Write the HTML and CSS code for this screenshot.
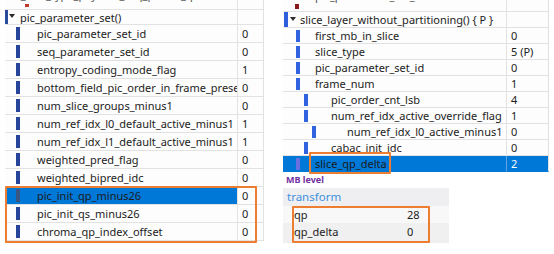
FILE: index.html
```html
<!DOCTYPE html>
<html>
<head>
<meta charset="utf-8">
<link rel="stylesheet" href="styles.css">
</head>
<body>
<div class="canvas">
  <section class="tree tree-left">
    <div class="row cut">
      <div class="name"><span class="cut-mark"></span><span class="cut-text">nal_unit_type_payload_seq_param_q</span></div>
      <div class="val"></div>
    </div>
    <div class="row head">
      <div class="name"><span class="mark"></span><span class="tri"></span><span class="txt">pic_parameter_set()</span></div>
      <div class="val"></div>
    </div>
    <div class="row"><div class="name l1"><span class="bar"></span><span class="txt">pic_parameter_set_id</span></div><div class="val">0</div></div>
    <div class="row"><div class="name l1"><span class="bar"></span><span class="txt">seq_parameter_set_id</span></div><div class="val">0</div></div>
    <div class="row"><div class="name l1"><span class="bar"></span><span class="txt">entropy_coding_mode_flag</span></div><div class="val">1</div></div>
    <div class="row"><div class="name l1"><span class="bar"></span><span class="txt">bottom_field_pic_order_in_frame_present_flag</span></div><div class="val">0</div></div>
    <div class="row"><div class="name l1"><span class="bar"></span><span class="txt">num_slice_groups_minus1</span></div><div class="val">0</div></div>
    <div class="row"><div class="name l1"><span class="bar"></span><span class="txt">num_ref_idx_l0_default_active_minus1</span></div><div class="val">1</div></div>
    <div class="row"><div class="name l1"><span class="bar"></span><span class="txt">num_ref_idx_l1_default_active_minus1</span></div><div class="val">1</div></div>
    <div class="row"><div class="name l1"><span class="bar"></span><span class="txt">weighted_pred_flag</span></div><div class="val">0</div></div>
    <div class="row"><div class="name l1"><span class="bar"></span><span class="txt">weighted_bipred_idc</span></div><div class="val">0</div></div>
    <div class="row sel"><div class="name l1"><span class="bar"></span><span class="txt">pic_init_qp_minus26</span></div><div class="val">0</div></div>
    <div class="row"><div class="name l1"><span class="bar"></span><span class="txt">pic_init_qs_minus26</span></div><div class="val">0</div></div>
    <div class="row"><div class="name l1"><span class="bar"></span><span class="txt">chroma_qp_index_offset</span></div><div class="val">0</div></div>
  </section>

  <div class="right-col">
    <section class="tree tree-right">
      <div class="row cut">
        <div class="name l1"><span class="cut-mark dark"></span><span class="cut-text">pic_parameter_set_id</span></div>
        <div class="val"><span class="cut-text">110010</span></div>
      </div>
      <div class="row head">
        <div class="name"><span class="mark"></span><span class="tri"></span><span class="txt">slice_layer_without_partitioning() { P }</span></div>
        <div class="val"></div>
      </div>
      <div class="row"><div class="name l1"><span class="bar"></span><span class="txt">first_mb_in_slice</span></div><div class="val">0</div></div>
      <div class="row"><div class="name l1"><span class="bar"></span><span class="txt">slice_type</span></div><div class="val">5 (P)</div></div>
      <div class="row"><div class="name l1"><span class="bar"></span><span class="txt">pic_parameter_set_id</span></div><div class="val">0</div></div>
      <div class="row"><div class="name l1"><span class="bar"></span><span class="txt">frame_num</span></div><div class="val">1</div></div>
      <div class="row"><div class="name l2"><span class="bar"></span><span class="txt">pic_order_cnt_lsb</span></div><div class="val">4</div></div>
      <div class="row"><div class="name l2"><span class="bar"></span><span class="txt">num_ref_idx_active_override_flag</span></div><div class="val">1</div></div>
      <div class="row"><div class="name l3"><span class="bar"></span><span class="txt">num_ref_idx_l0_active_minus1</span></div><div class="val">0</div></div>
      <div class="row"><div class="name l2"><span class="bar"></span><span class="txt">cabac_init_idc</span></div><div class="val">0</div></div>
      <div class="row sel"><div class="name l1"><span class="bar"></span><span class="txt">slice_qp_delta</span></div><div class="val">2</div></div>
    </section>

    <div class="mb-level">MB level</div>

    <section class="transform">
      <div class="t-head">transform</div>
      <div class="t-row"><span class="t-name">qp</span><span class="t-val">28</span></div>
      <div class="t-row alt"><span class="t-name">qp_delta</span><span class="t-val">0</span></div>
    </section>
  </div>

  <div class="hl hl-left"></div>
  <div class="hl hl-slice"></div>
  <div class="hl hl-transform"></div>
</div>
</body>
</html>
```

FILE: styles.css
```css
* { box-sizing: border-box; }

body {
  margin: 0;
  background: #ffffff;
  font-family: "Noto Sans", "Open Sans", sans-serif;
  font-size: 11px;
  color: #1c1c1c;
}

.canvas {
  position: relative;
  display: flex;
  gap: 19px;
  padding-left: 5px;
  width: 554px;
  height: 254px;
  overflow: hidden;
}

/* ---------- tree tables ---------- */
.tree { display: flex; flex-direction: column; }
.tree-left { width: 259px; }
.tree-right { width: 266px; }

.row { display: grid; }
.tree-left .row { grid-template-columns: 233px 26px; height: 18px; }
.tree-right .row { grid-template-columns: 224px 42px; height: 16px; }

.tree-left .row.cut { height: 10px; }
.tree-left .row.head { height: 15px; }
.tree-right .row.cut { height: 12px; }
.tree-right .row.head { height: 16px; }

.row > div {
  border-bottom: 1px solid #e2e2e2;
  background: #fdfdfd;
}

.name {
  display: flex;
  align-items: center;
  border-right: 1px solid #e2e2e2;
  white-space: nowrap;
  overflow: hidden;
  min-width: 0;
}

.val {
  display: flex;
  align-items: center;
  padding-left: 4px;
  white-space: nowrap;
  overflow: hidden;
  border-right: 1px solid #e2e2e2;
}

.txt { flex: none; }

/* clipped top row */
.row.cut .name, .row.cut .val { align-items: flex-start; }
.cut-text {
  display: block;
  flex: none;
  line-height: 18px;
  margin-top: -14px;
  color: #555;
}
.tree-right .cut .cut-text { margin-top: -13px; }
.tree-left .cut .cut-text { margin-left: 15px; }
.cut-mark {
  flex: none;
  width: 4px;
  height: 3px;
  margin-top: 4px;
  margin-left: 20px;
  background: #c0392b;
}
.tree-left .cut .cut-mark { margin-right: -39px; }
.cut-mark.dark {
  height: 5px;
  margin-top: 4px;
  margin-left: 12px;
  margin-right: 16px;
  background: #8b1a1a;
}

/* header row */
.mark {
  flex: none;
  align-self: stretch;
  width: 3px;
  background: #2a4a9c;
}
.tri {
  flex: none;
  width: 0;
  height: 0;
  border-left: 3px solid transparent;
  border-right: 3px solid transparent;
  border-top: 4px solid #2b2b2b;
  margin: -2px 5px 0 1px;
}
.tree-right .mark { margin-left: 1px; width: 4px; background: #2f5fdc; }
.tree-right .tri { margin: -2px 4px 0 2px; }

/* level bars */
.bar {
  flex: none;
  width: 4px;
  height: 13px;
  background: #25449a;
}
.tree-left .l1 .bar { margin-left: 11px; margin-right: 17px; }

.tree-right .bar { height: 12px; background: #3162df; }
.tree-right .l1 .bar { margin-left: 13px; margin-right: 15px; }
.tree-right .l2 .bar { margin-left: 21px; margin-right: 23px; }
.tree-right .l3 .bar { margin-left: 29px; margin-right: 31px; }

/* selection */
.tree-left .row.sel .name { background: #0078d7; }
.tree-left .row.sel .bar { background: #3a5784; }

.tree-right .row.sel > div { background: #0078d7; border-bottom-color: #0078d7; }
.tree-right .row.sel .name { border-right-color: #5fa6e6; }
.tree-right .row.sel .val { color: #ffffff; }
.tree-right .row.sel .bar { background: #6b6fe2; }

/* ---------- MB level / transform ---------- */
.right-col { display: flex; flex-direction: column; }

.mb-level {
  height: 16px;
  line-height: 16px;
  padding-left: 3px;
  font-size: 9px;
  font-weight: 700;
  color: #7030a0;
}

.transform {
  width: 166px;
  background: #efeff1;
  padding-bottom: 3px;
}
.t-head {
  height: 18px;
  line-height: 18px;
  padding-left: 4px;
  color: #3d8fe0;
  font-size: 11.5px;
}
.t-row {
  display: grid;
  grid-template-columns: 124px 1fr;
  height: 17px;
  align-items: center;
  background: #f8f8f8;
}
.t-row.alt { background: #f0f0f0; }
.t-name { padding-left: 11px; }

/* ---------- annotation boxes ---------- */
.hl {
  position: absolute;
  border: 2px solid #ed7d31;
  border-radius: 1px;
}
.hl-left { left: 5px; top: 186px; width: 252px; height: 57px; }
.hl-slice { left: 309px; top: 152px; width: 82px; height: 22px; }
.hl-transform { left: 292px; top: 206px; width: 138px; height: 37px; }
```
